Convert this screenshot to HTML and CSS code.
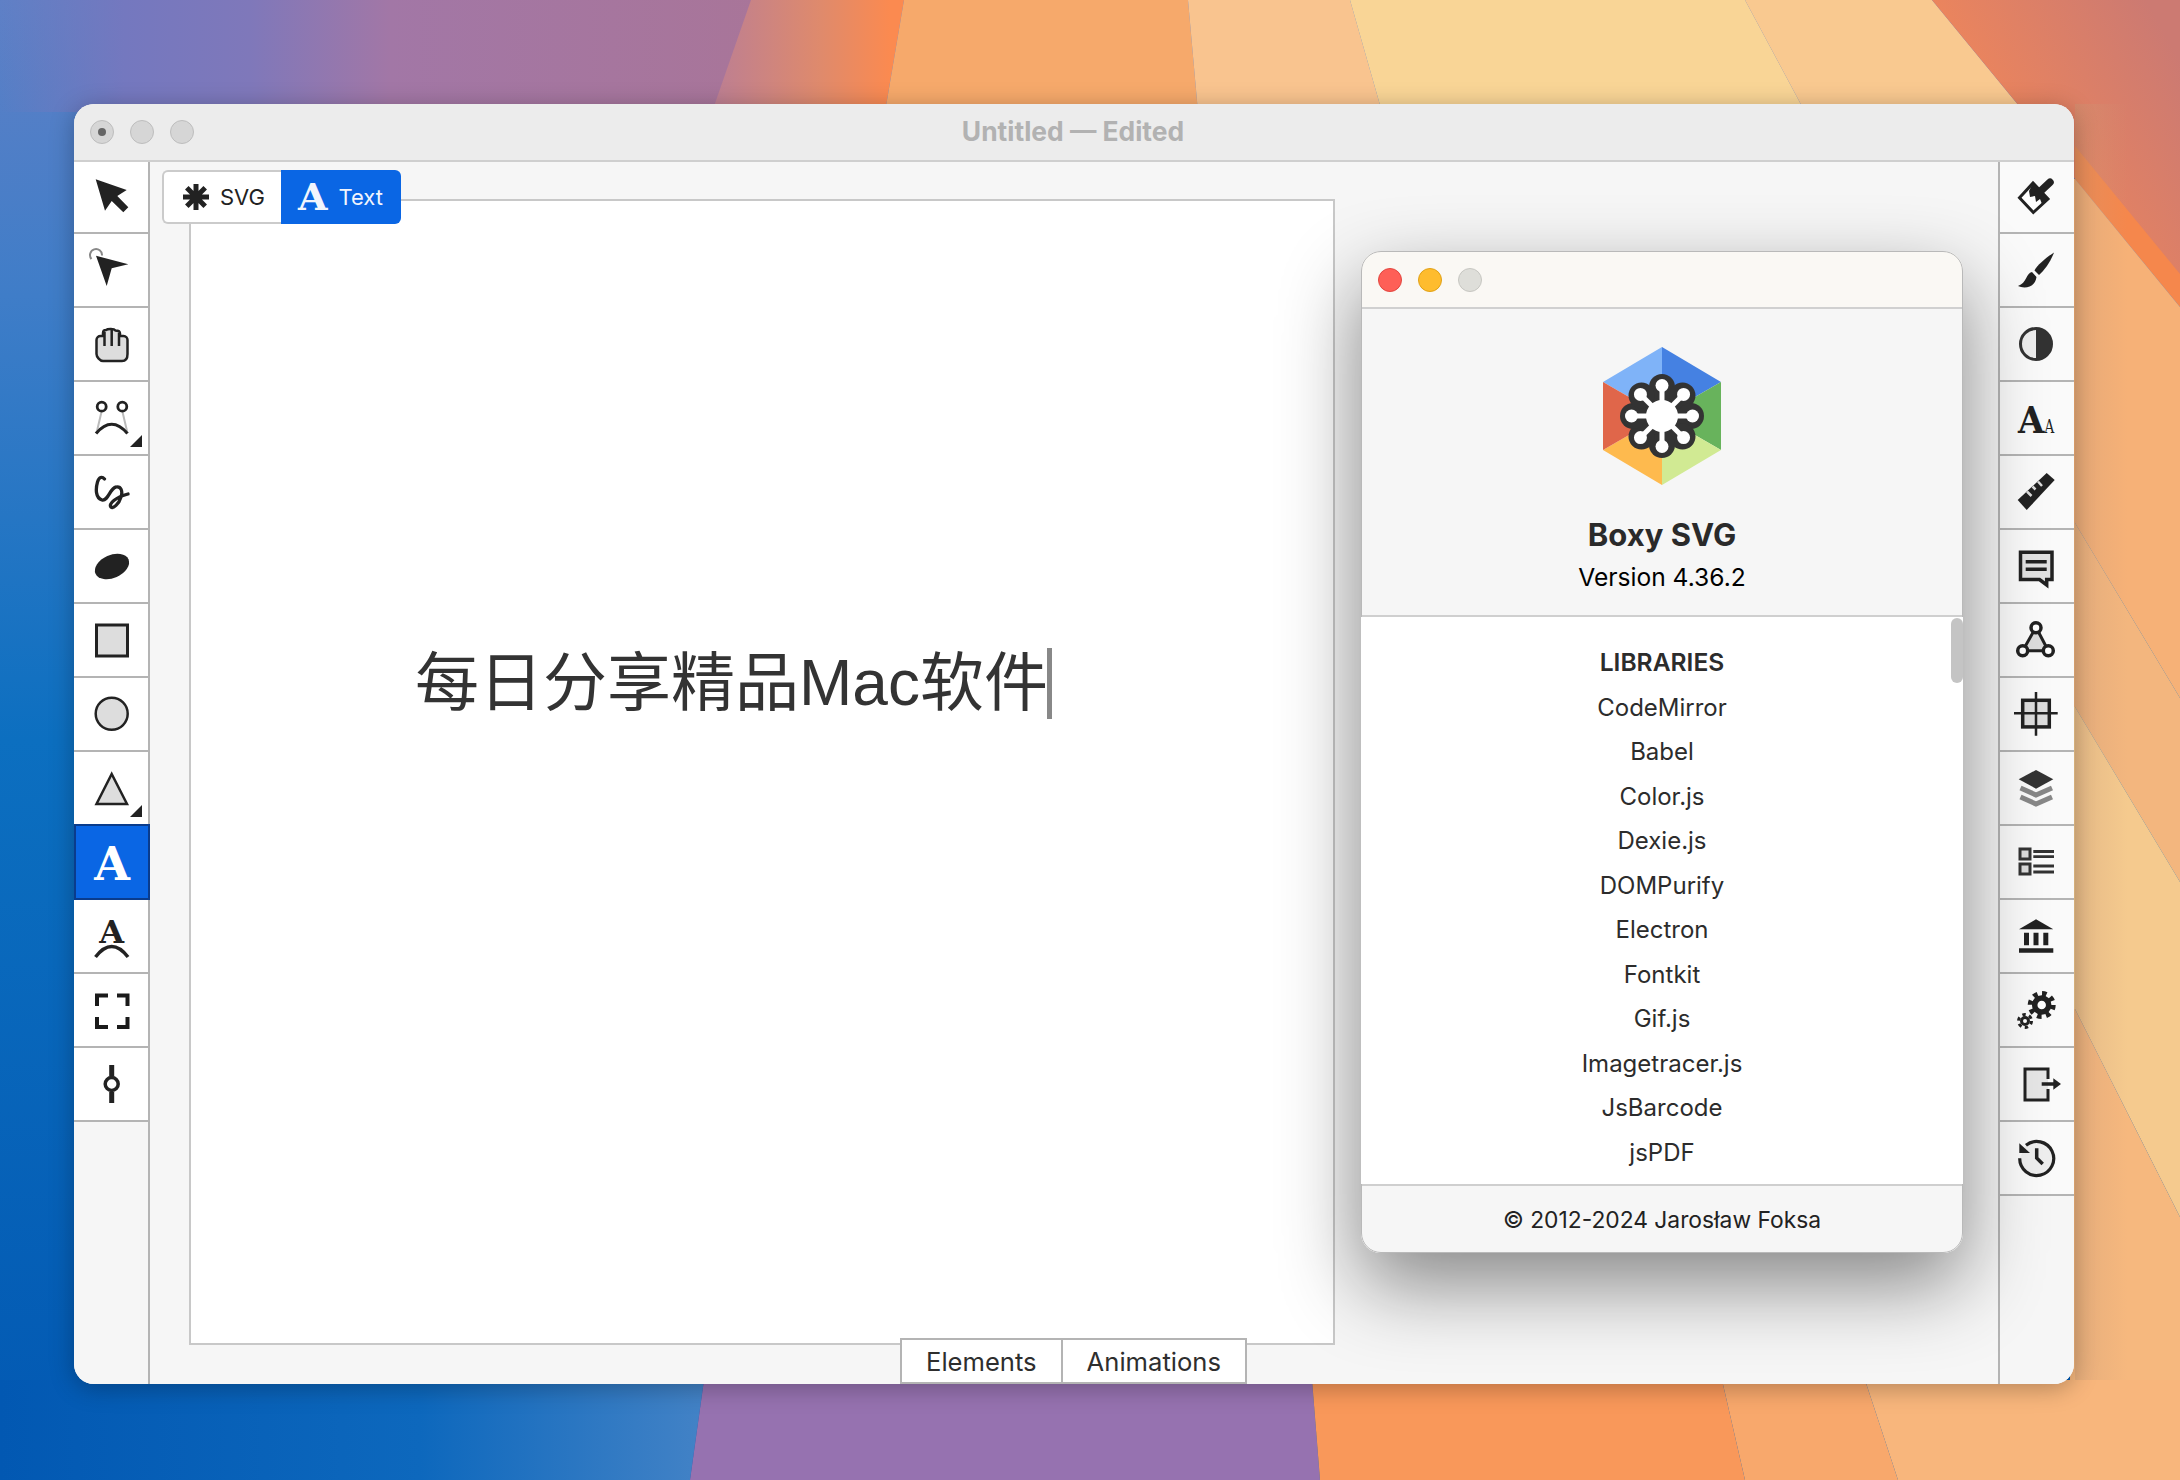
FILE: index.html
```html
<!DOCTYPE html>
<html lang="en">
<head>
<meta charset="utf-8">
<title>Boxy SVG</title>
<link rel="stylesheet" href="styles.css">
</head>
<body>
<div class="desktop">
  <svg class="wallpaper" viewBox="0 0 2180 1480" aria-hidden="true">
    <defs>
      <linearGradient id="wpBlue" x1="0" y1="0" x2="0" y2="1">
        <stop offset="0" stop-color="#5f80c6"/>
        <stop offset=".2" stop-color="#3f7dc8"/>
        <stop offset=".5" stop-color="#0c6fc0"/>
        <stop offset="1" stop-color="#0258b2"/>
      </linearGradient>
      <linearGradient id="wpTop" x1="0" y1="0" x2="780" y2="0" gradientUnits="userSpaceOnUse">
        <stop offset="0" stop-color="#7378bd" stop-opacity="0"/>
        <stop offset=".16" stop-color="#7478bf"/>
        <stop offset=".32" stop-color="#7f78ba"/>
        <stop offset=".5" stop-color="#a277a6"/>
        <stop offset="1" stop-color="#a97598"/>
      </linearGradient>
      <linearGradient id="wpPink" x1="716" y1="0" x2="890" y2="0" gradientUnits="userSpaceOnUse">
        <stop offset="0" stop-color="#bd7f92"/>
        <stop offset=".6" stop-color="#df8a6c"/>
        <stop offset="1" stop-color="#fb8a50"/>
      </linearGradient>
      <linearGradient id="wpCorner" x1="1930" y1="200" x2="2180" y2="60" gradientUnits="userSpaceOnUse">
        <stop offset="0" stop-color="#fb8a52"/>
        <stop offset="1" stop-color="#cc7a72"/>
      </linearGradient>
      <linearGradient id="wpBottomBlue" x1="0" y1="0" x2="700" y2="0" gradientUnits="userSpaceOnUse">
        <stop offset="0" stop-color="#0258b2"/>
        <stop offset=".6" stop-color="#0d68bd"/>
        <stop offset="1" stop-color="#4282c6"/>
      </linearGradient>
      <linearGradient id="wpEdge" x1="2075" y1="0" x2="2180" y2="0" gradientUnits="userSpaceOnUse">
        <stop offset="0" stop-color="#c89a78" stop-opacity=".35"/>
        <stop offset=".5" stop-color="#c89a78" stop-opacity="0"/>
      </linearGradient>
    </defs>
    <rect width="2180" height="1480" fill="url(#wpBlue)"/>
    <rect width="780" height="112" fill="url(#wpTop)"/>
    <polygon points="751,0 904,0 885,112 712,112" fill="url(#wpPink)"/>
    <polygon points="904,0 1188,0 1198,112 885,112" fill="#f6a96b"/>
    <polygon points="1188,0 1350,0 1382,112 1198,112" fill="#f9c48f"/>
    <polygon points="1350,0 1745,0 1805,112 1382,112" fill="#f9d596"/>
    <polygon points="1745,0 1932,0 2024,112 1805,112" fill="#f9c990"/>
    <polygon points="1932,0 2180,0 2180,306 2075,179 2024,112" fill="url(#wpCorner)"/>
    <polygon points="2075,146 2180,274 2180,307 2075,179" fill="#f5874c"/>
    <polygon points="2070,179 2075,179 2180,307 2180,698 2075,523 2070,523" fill="#f6b177"/>
    <polygon points="2070,523 2075,523 2180,698 2180,882 2075,707 2070,707" fill="#f3b67e"/>
    <polygon points="2070,707 2075,707 2180,882 2180,1217 2075,1009 2070,1009" fill="#f5ca8e"/>
    <polygon points="2070,1009 2075,1009 2180,1217 2180,1480 2070,1480" fill="#f6b87e"/>
    <rect x="2075" y="104" width="105" height="1376" fill="url(#wpEdge)"/>
    <polygon points="0,1380 704,1380 690,1480 0,1480" fill="url(#wpBottomBlue)"/>
    <polygon points="704,1380 1312,1380 1320,1480 690,1480" fill="#9672b0"/>
    <polygon points="1312,1380 1722,1380 1745,1480 1320,1480" fill="#f9985a"/>
    <polygon points="1722,1380 1865,1380 1898,1480 1745,1480" fill="#f8a86c"/>
    <polygon points="1865,1380 2180,1380 2180,1480 1898,1480" fill="#f8b67c"/>
  </svg>

  <section class="window">
    <header class="titlebar">
      <div class="lights">
        <span class="light light-close"></span>
        <span class="light"></span>
        <span class="light"></span>
      </div>
      <div class="doc-title">Untitled — Edited</div>
    </header>
    <div class="workspace">
      <nav class="toolbar toolbar-left">
        <div class="tool"><svg class="ico" viewBox="1 0 34 34"><polygon points="1.700,-.7 32.700,10 23.300,16 34.300,27.300 29.300,32.300 17.700,21 11,30.700" fill="#222"/></svg></div>
        <div class="tool"><svg class="ico" viewBox="1 0 34 34"><path d="M-2.500 5A6 6 0 1 1 8 1.500" fill="none" stroke="#888" stroke-width="2"/><polygon points="2,1.700 34.300,10.300 17.700,14.300 12.700,32" fill="#222"/></svg></div>
        <div class="tool"><svg class="ico" viewBox="1 0 34 34"><path d="M2.500 26V12C2.500 9.500 4.500 8 6.500 8H9V5C9 3 10.500 2 12 2C14 .5 20 .5 21.500 2.500C24 2.500 26 3.500 26 5.500V8H29.500C32 8 33.500 10 33.500 12V26C33.500 30.500 31.500 33 28 33H9C6 33 2.500 29 2.500 26Z" fill="#ddd" stroke="#222" stroke-width="2.500"/><path d="M10.500 4V18M17.700 2V18M25 5V18" fill="none" stroke="#222" stroke-width="2.500"/></svg></div>
        <div class="tool"><svg class="ico" viewBox="1 0 34 34"><path d="M7.700 9L3 29M28.300 9L33 29" stroke="#bbb" stroke-width="2" fill="none"/><circle cx="7.700" cy="4.700" r="4.500" fill="#fff" stroke="#222" stroke-width="2.800"/><circle cx="28.300" cy="4.700" r="4.500" fill="#fff" stroke="#222" stroke-width="2.800"/><path d="M2 31.500Q17.700 13 33.500 31.500" fill="none" stroke="#222" stroke-width="3.200"/></svg><span class="corner"></span></div>
        <div class="tool"><svg class="ico" viewBox="1 0 34 34"><path d="M10.500 3C8 0 5 1 3.500 6C1.500 13 1.500 22 8 24C14 25.500 16 12 22 11C27 10 29 15 27 21C25 28 19 33 17 31C14 28 22 21 34 18" fill="none" stroke="#222" stroke-width="3.300" stroke-linecap="round"/></svg></div>
        <div class="tool"><svg class="ico" viewBox="1 0 34 34"><ellipse cx="18" cy="16.500" rx="18" ry="11.500" transform="rotate(-24 18 16.500)" fill="#222"/></svg></div>
        <div class="tool"><svg class="ico" viewBox="1 0 34 34"><rect x="2.500" y="1" width="31" height="31" fill="#ddd" stroke="#222" stroke-width="3"/></svg></div>
        <div class="tool"><svg class="ico" viewBox="1 0 34 34"><circle cx="17.700" cy="15.700" r="16" fill="#ddd" stroke="#222" stroke-width="2.500"/></svg></div>
        <div class="tool"><svg class="ico" viewBox="1 0 34 34"><polygon points="17.700,2 33,32 2.500,32" fill="#ddd" stroke="#222" stroke-width="2.500"/></svg><span class="corner"></span></div>
        <div class="tool tool-active"><span class="glyph-a glyph-a-lg">A</span></div>
        <div class="tool"><svg class="ico" viewBox="1 0 34 34"><text x="17.700" y="23" text-anchor="middle" class="svg-serif" font-size="32" fill="#222">A</text><path d="M1.500 37Q17.700 16 34 37" fill="none" stroke="#222" stroke-width="3.500"/></svg></div>
        <div class="tool"><svg class="ico" viewBox="1 0 34 34"><path d="M14 1.500H3V12M23 1.500H33.500V12M3 23V33H14M33.500 23V33H23" fill="none" stroke="#1a1a1a" stroke-width="4"/></svg></div>
        <div class="tool"><svg class="ico" viewBox="1 0 34 34"><path d="M17.700 -3V8M17.700 24V35" stroke="#222" stroke-width="5" fill="none"/><circle cx="17.700" cy="16" r="6.500" fill="#fff" stroke="#222" stroke-width="3.500"/></svg></div>
      </nav>

      <main class="stage">
        <div class="canvas">
          <div class="canvas-text">每日分享精品Mac软件<span class="caret"></span></div>
        </div>
        <div class="mode-tabs">
          <div class="mode-tab">
            <svg class="tab-ico" viewBox="0 0 26 26"><path d="M13 0V26M0 13H26M3.800 3.800L22.200 22.200M22.200 3.800L3.800 22.200" stroke="#222" stroke-width="5" fill="none"/></svg>
            <span>SVG</span>
          </div>
          <div class="mode-tab mode-tab-on">
            <span class="glyph-a glyph-a-md">A</span>
            <span>Text</span>
          </div>
        </div>
        <div class="panel-tabs">
          <div class="panel-tab">Elements</div>
          <div class="panel-tab">Animations</div>
        </div>
      </main>

      <nav class="toolbar toolbar-right">
        <div class="tool tool-r"><svg class="ico" viewBox="0 0 34 34"><polygon points="-.5,17.700 13,3 28,19 13.300,32.500" fill="#fff" stroke="#222" stroke-width="3"/><polygon points="13,3 28,19 22,24 20,19 16,22 15,16 10,17 9,11" fill="#222"/><path d="M18.300 13.300L30 2.300" stroke="#222" stroke-width="7.500" stroke-linecap="round"/></svg></div>
        <div class="tool tool-r"><svg class="ico" viewBox="0 0 34 34"><path d="M34 -1.500C27 3 17 11 14.500 16.500L19 21C24 17 31 7 34 -1.500Z" fill="#222"/><path d="M12 18C6 19 7 29 -2 32C4 35 15 34 16.500 23Z" fill="#222"/></svg></div>
        <div class="tool tool-r"><svg class="ico" viewBox="0 0 34 34"><circle cx="16" cy="16" r="15.500" fill="#eee" stroke="#333" stroke-width="3"/><path d="M16 0.500A15.500 15.500 0 0 1 16 31.500Z" fill="#333"/></svg></div>
        <div class="tool tool-r"><svg class="ico" viewBox="0 0 34 34"><text transform="translate(-2 31) scale(1 1.100)" class="svg-serif" font-size="34" fill="#222">A</text><text transform="translate(24.500 31) scale(.75 1)" class="svg-serif-thin" font-size="18" fill="#222">A</text></svg></div>
        <div class="tool tool-r"><svg class="ico" viewBox="0 0 34 34"><polygon points="-2.300,24 26.700,-3 34.700,4 6.700,34" fill="#222"/><path d="M7 15.500L11.500 20M12.500 10.500L15.500 13.500M18 5.500L22 10" stroke="#ddd" stroke-width="2.500" fill="none"/></svg></div>
        <div class="tool tool-r"><svg class="ico" viewBox="0 0 34 34"><path d="M.5 2.300H32V29.500H26.700V35L19.500 29.500H.5Z" fill="#e2e2e2" stroke="#222" stroke-width="3.500"/><path d="M5.700 11.700H26.700M5.700 19.300H26.700" stroke="#222" stroke-width="3.500"/></svg></div>
        <div class="tool tool-r"><svg class="ico" viewBox="0 0 34 34"><polygon points="16,3.300 28.300,26.700 2.700,26.700" fill="#ddd" stroke="#222" stroke-width="3"/><circle cx="16" cy="3.800" r="5" fill="#fff" stroke="#222" stroke-width="3.500"/><circle cx="2.700" cy="26.700" r="5" fill="#fff" stroke="#222" stroke-width="3.500"/><circle cx="28.300" cy="26.700" r="5" fill="#fff" stroke="#222" stroke-width="3.500"/></svg></div>
        <div class="tool tool-r"><svg class="ico" viewBox="0 0 34 34"><rect x="2.700" y="2.300" width="26.600" height="26.600" fill="#ddd" stroke="#222" stroke-width="3.500"/><path d="M16 -6V37.700M-6 15.300H37.700" stroke="#222" stroke-width="2.500"/></svg></div>
        <div class="tool tool-r"><svg class="ico" viewBox="0 0 34 34"><path d="M.5 16L16 23L32 16M.5 25L16 32L32 25" fill="none" stroke="#888" stroke-width="5"/><polygon points="16,-2 33.300,7.300 16,16.700 -1.300,7.300" fill="#333"/></svg></div>
        <div class="tool tool-r"><svg class="ico" viewBox="0 0 34 34"><rect x="0" y="3" width="10" height="10" fill="#ddd" stroke="#333" stroke-width="3"/><rect x="0" y="18" width="10" height="10" fill="#ddd" stroke="#333" stroke-width="3"/><path d="M13.300 5.500H34M13.300 10.700H34M13.300 20H34M13.300 26H34" stroke="#333" stroke-width="2.800"/></svg></div>
        <div class="tool tool-r"><svg class="ico" viewBox="0 0 34 34"><polygon points="16,-.7 33.300,9.300 -1,9.300" fill="#222"/><path d="M-1 30.500H33.300" stroke="#222" stroke-width="4.500"/><path d="M6.500 12.700V25.300M16 12.700V25.300M25.800 12.700V25.300" stroke="#222" stroke-width="5"/></svg></div>
        <div class="tool tool-r"><svg class="ico" viewBox="0 0 34 34"><circle cx="21.700" cy="11" r="7" fill="#fff" stroke="#222" stroke-width="5.500"/><circle cx="21.700" cy="11" r="11.500" fill="none" stroke="#222" stroke-width="5" stroke-dasharray="4.500 4.530"/><circle cx="5" cy="27" r="3.500" fill="#fff" stroke="#222" stroke-width="3"/><circle cx="5" cy="27" r="6.500" fill="none" stroke="#222" stroke-width="3" stroke-dasharray="3.400 3.400"/></svg></div>
        <div class="tool tool-r"><svg class="ico" viewBox="0 0 34 34"><path d="M28 11V1H5V32H28V21" fill="#e6e6e6" stroke="#222" stroke-width="3"/><path d="M21.700 16H34" stroke="#222" stroke-width="3.500"/><polygon points="33.300,10.300 41,16 33.300,21.700" fill="#222"/></svg></div>
        <div class="tool tool-r"><svg class="ico" viewBox="0 0 34 34"><path d="M6 3.300A17 17 0 1 1 -.3 16.300" fill="#eee" stroke="#222" stroke-width="3.200"/><polygon points="-.7,1.300 -.7,11 10,11" fill="#222"/><path d="M16.700 6.300V16L22.700 22" fill="none" stroke="#222" stroke-width="3.500"/></svg></div>
      </nav>
    </div>

    <aside class="dialog">
      <div class="dialog-bar">
        <span class="dot dot-red"></span>
        <span class="dot dot-amber"></span>
        <span class="dot dot-grey"></span>
      </div>
      <div class="about">
        <svg class="logo" viewBox="0 0 120 140">
          <defs>
            <g id="lobeDark"><circle cx="60" cy="40" r="13" fill="#333"/></g>
            <g id="lobeWhite"><path d="M60 69V39" stroke="#fff" stroke-width="5"/><circle cx="60" cy="38.500" r="6.500" fill="#fff"/></g>
          </defs>
          <polygon points="60,0 60,69 1,35" fill="#7fb3f8"/>
          <polygon points="60,0 119,35 60,69" fill="#4581e2"/>
          <polygon points="119,35 119,103 60,69" fill="#68b35c"/>
          <polygon points="119,103 60,138 60,69" fill="#d1ea93"/>
          <polygon points="60,138 1,103 60,69" fill="#feba4e"/>
          <polygon points="1,103 1,35 60,69" fill="#e0664a"/>
          <circle cx="60" cy="69" r="30" fill="#333"/>
          <use href="#lobeDark"/>
          <use href="#lobeDark" transform="rotate(45 60 69)"/>
          <use href="#lobeDark" transform="rotate(90 60 69)"/>
          <use href="#lobeDark" transform="rotate(135 60 69)"/>
          <use href="#lobeDark" transform="rotate(180 60 69)"/>
          <use href="#lobeDark" transform="rotate(225 60 69)"/>
          <use href="#lobeDark" transform="rotate(270 60 69)"/>
          <use href="#lobeDark" transform="rotate(315 60 69)"/>
          <circle cx="60" cy="69" r="16" fill="#fff"/>
          <use href="#lobeWhite"/>
          <use href="#lobeWhite" transform="rotate(45 60 69)"/>
          <use href="#lobeWhite" transform="rotate(90 60 69)"/>
          <use href="#lobeWhite" transform="rotate(135 60 69)"/>
          <use href="#lobeWhite" transform="rotate(180 60 69)"/>
          <use href="#lobeWhite" transform="rotate(225 60 69)"/>
          <use href="#lobeWhite" transform="rotate(270 60 69)"/>
          <use href="#lobeWhite" transform="rotate(315 60 69)"/>
        </svg>
        <div class="app-name">Boxy SVG</div>
        <div class="app-version">Version 4.36.2</div>
      </div>
      <div class="libs">
        <div class="libs-head">LIBRARIES</div>
        <div class="lib">CodeMirror</div>
        <div class="lib">Babel</div>
        <div class="lib">Color.js</div>
        <div class="lib">Dexie.js</div>
        <div class="lib">DOMPurify</div>
        <div class="lib">Electron</div>
        <div class="lib">Fontkit</div>
        <div class="lib">Gif.js</div>
        <div class="lib">Imagetracer.js</div>
        <div class="lib">JsBarcode</div>
        <div class="lib">jsPDF</div>
        <span class="thumb"></span>
      </div>
      <div class="copyright">© 2012-2024 Jarosław Foksa</div>
    </aside>
  </section>
</div>
</body>
</html>
```

FILE: styles.css
```css
* { box-sizing: border-box; }

html, body {
  margin: 0;
  padding: 0;
}

body {
  font-family: Inter, "Liberation Sans", sans-serif;
  color: #333;
}

.desktop {
  position: relative;
  width: 2180px;
  height: 1480px;
  overflow: hidden;
}

.wallpaper {
  position: absolute;
  inset: 0;
  width: 2180px;
  height: 1480px;
  display: block;
}

.window {
  position: absolute;
  left: 74px;
  top: 104px;
  width: 2000px;
  height: 1280px;
  display: flex;
  flex-direction: column;
  background: #f6f6f6;
  border-radius: 20px;
  overflow: hidden;
  box-shadow: 0 4px 24px rgba(0, 0, 0, .28);
}

.titlebar {
  position: relative;
  z-index: 2;
  flex: none;
  height: 56px;
  display: flex;
  align-items: center;
  justify-content: center;
  background: #ececec;
  box-shadow: 0 2px 0 #cfcfcf;
}

.lights {
  position: absolute;
  left: 16px;
  top: 16px;
  display: flex;
  gap: 16px;
}

.light {
  position: relative;
  width: 24px;
  height: 24px;
  border-radius: 50%;
  background: #d6d6d6;
  border: 1px solid #bdbdbd;
}

.light-close::after {
  content: "";
  position: absolute;
  left: 7px;
  top: 7px;
  width: 8px;
  height: 8px;
  border-radius: 50%;
  background: #666;
}

.doc-title {
  margin: -2px 0 0 -2px;
  font-size: 26.4px;
  font-weight: 700;
  color: #b2b2b2;
}

.workspace {
  flex: 1;
  display: flex;
  min-height: 0;
}

.toolbar {
  flex: none;
  width: 76px;
  background: #f6f6f6;
  display: flex;
  flex-direction: column;
}

.toolbar-left { border-right: 2px solid #b4b4b4; }
.toolbar-right { border-left: 2px solid #b4b4b4; }

.tool {
  position: relative;
  flex: none;
  height: 74px;
  padding: 2px 0 0 2px;
  display: flex;
  align-items: center;
  justify-content: center;
  background: #fff;
  border-bottom: 2px solid #b4b4b4;
}

.tool-r {
  padding-left: 0;
  background: #fafafa;
}

.tool-active {
  width: 76px;
  height: 76px;
  margin-top: -2px;
  padding: 3px 0 0;
  background: #0a66e4;
  border: 2px solid #0a3c8c;
  z-index: 1;
}

.ico {
  width: 34px;
  height: 34px;
  display: block;
  overflow: visible;
}

.corner {
  position: absolute;
  right: 6px;
  bottom: 7px;
  width: 12px;
  height: 12px;
  background: #222;
  clip-path: polygon(100% 0, 100% 100%, 0 100%);
}

.glyph-a {
  font-family: "DejaVu Serif", "Liberation Serif", serif;
  font-weight: 700;
  color: #fff;
  line-height: 1;
}

.glyph-a-lg { font-size: 46px; }
.glyph-a-md { font-size: 38px; color: #f1f5fd; }

.svg-serif {
  font-family: "DejaVu Serif", "Liberation Serif", serif;
  font-weight: 700;
}

.svg-serif-thin {
  font-family: "DejaVu Serif", "Liberation Serif", serif;
  font-weight: 400;
}

.stage {
  position: relative;
  flex: 1;
  min-width: 0;
  padding: 39px 0 0 39px;
  background: #f6f6f6;
}

.canvas {
  position: relative;
  width: 1146px;
  height: 1146px;
  background: #fff;
  border: 2px solid #c8c8c8;
}

.canvas-text {
  position: absolute;
  left: 224px;
  top: 445px;
  white-space: nowrap;
  font-family: "Liberation Sans", "Noto Sans CJK SC", sans-serif;
  font-size: 64px;
  line-height: 74px;
  color: #333;
}

.caret {
  position: absolute;
  right: -4px;
  top: 2px;
  width: 5px;
  height: 71px;
  background: #888;
}

.mode-tabs {
  position: absolute;
  left: 12px;
  top: 10px;
  display: flex;
  height: 54px;
  font-size: 22px;
}

.mode-tab {
  display: flex;
  align-items: center;
  gap: 11px;
  width: 119px;
  padding-left: 19px;
  background: #fff;
  color: #222;
  border: 2px solid #cbcbcb;
  border-right: 0;
  border-radius: 6px 0 0 6px;
}

.mode-tab-on {
  width: 120px;
  padding-left: 17px;
  background: #0a66e4;
  color: #f1f5fd;
  border: 0;
  border-radius: 0 6px 6px 0;
}

.tab-ico {
  width: 26px;
  height: 26px;
  display: block;
}

.panel-tabs {
  position: absolute;
  left: 750px;
  bottom: 0;
  display: flex;
  height: 46px;
  font-size: 25.6px;
  color: #2e2e2e;
}

.panel-tab {
  display: flex;
  align-items: center;
  padding: 0 24px;
  background: #fff;
  border: 2px solid #b4b4b4;
}

.panel-tab + .panel-tab { border-left: 0; }

.dialog {
  position: absolute;
  left: 1287px;
  top: 147px;
  z-index: 2;
  width: 602px;
  height: 1002px;
  display: flex;
  flex-direction: column;
  background: #f6f6f6;
  border-radius: 20px;
  overflow: hidden;
  outline: 1px solid #b9b9b9;
  outline-offset: -1px;
}

.window::after {
  content: "";
  position: absolute;
  left: 1287px;
  top: 147px;
  z-index: 1;
  width: 602px;
  height: 1002px;
  border-radius: 20px;
  box-shadow: 0 32px 80px rgba(0, 0, 0, .45);
}

.dialog-bar {
  flex: none;
  height: 58px;
  display: flex;
  align-items: center;
  gap: 16px;
  padding: 2px 0 0 17px;
  background: #faf8f4;
  border-bottom: 2px solid #d0d0d0;
}

.dot {
  width: 24px;
  height: 24px;
  border-radius: 50%;
}

.dot-red { background: #fe5f57; border: 1px solid #e2463f; }
.dot-amber { background: #febc2e; border: 1px solid #e1a116; }
.dot-grey { background: #deded9; border: 1px solid #c6c6c1; }

.about {
  flex: none;
  height: 308px;
  display: flex;
  flex-direction: column;
  align-items: center;
  padding-top: 38px;
  background: #f6f6f6;
  border-bottom: 2px solid #cfcfcf;
}

.logo {
  width: 120px;
  height: 140px;
  display: block;
}

.app-name {
  margin-top: 28px;
  font-size: 31px;
  line-height: 40px;
  font-weight: 700;
  color: #2a2a2a;
}

.app-version {
  margin-top: 6px;
  font-size: 24.6px;
  line-height: 32px;
  color: #000;
}

.libs {
  position: relative;
  flex: 1;
  min-height: 0;
  padding-top: 23px;
  background: #fff;
  font-size: 24px;
  line-height: 44.5px;
  text-align: center;
  color: #2c2c2c;
  overflow: hidden;
}

.libs-head {
  margin-bottom: 1px;
  font-weight: 600;
  font-size: 24.6px;
}

.thumb {
  position: absolute;
  right: 0;
  top: 1px;
  width: 12px;
  height: 65px;
  border-radius: 6px;
  background: #c4c4c4;
}

.copyright {
  flex: none;
  height: 69px;
  display: flex;
  align-items: center;
  justify-content: center;
  border-top: 2px solid #cfcfcf;
  font-size: 22.8px;
  color: #222;
}
```
